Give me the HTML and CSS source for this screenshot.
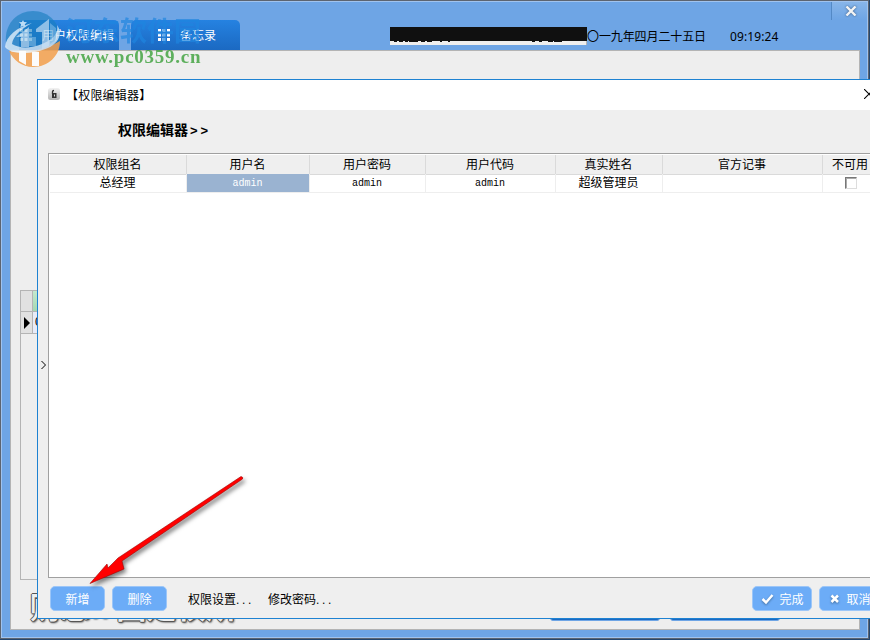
FILE: index.html
```html
<!DOCTYPE html>
<html lang="zh-CN">
<head>
  <meta charset="utf-8">
  <title>权限编辑器</title>
  <link rel="stylesheet" href="styles.css">
</head>
<body>
  <div class="main-window">
    <div class="top-bar">
      <div class="tabs">
        <div class="tab first">
          <svg class="grid-icon" viewBox="0 0 12 12"><path d="M0 0h3v3H0zM4.500 0h3v3h-3zM9 0h3v3H9zM0 4.500h3v3H0zM4.500 4.500h3v3h-3zM9 4.500h3v3H9zM0 9h3v3H0zM4.500 9h3v3h-3zM9 9h3v3H9z"/></svg>
          <span>用户权限编辑</span>
        </div>
        <div class="tab">
          <svg class="grid-icon" viewBox="0 0 12 12"><path d="M0 0h3v3H0zM4.500 0h3v3h-3zM9 0h3v3H9zM0 4.500h3v3H0zM4.500 4.500h3v3h-3zM9 4.500h3v3H9zM0 9h3v3H0zM4.500 9h3v3h-3zM9 9h3v3H9z"/></svg>
          <span>备忘录</span>
        </div>
      </div>
      <div class="status">
        <svg class="redacted" viewBox="0 0 197 18">
          <path fill="#eee" d="M0 0h197v18H0z"/>
          <path fill="#101010" d="M0 0h197v14H0zM4 14h3v1H4zM9 14h4v1H9zM15 14h3v1h-3zM19 14h9v1h-9zM31 14h4v1h-4zM37 14h5v1h-5zM50 14h2v1h-2zM58 14h2v1h-2zM142 14h3v1h-3zM149 14h3v1h-3zM158 14h5v1h-5zM164 14h8v1h-8z"/>
          <path fill="#b4b4b4" d="M196 14h1v4h-1z"/>
        </svg>
        <span class="date">〇一九年四月二十五日</span>
        <span class="time">09:19:24</span>
      </div>
      <div class="window-close">
        <svg viewBox="0 0 12 10"><path d="M1.500.5 10.500 9.500M10.500.5 1.500 9.500"/></svg>
      </div>
    </div>
    <div class="content">
      <div class="back-grid">
        <div class="back-row"><i></i><b class="green"></b></div>
        <div class="back-row">
          <i><svg viewBox="0 0 6 12"><path d="M0 0 6 6 0 12z"/></svg></i><b>0</b>
        </div>
      </div>
      <div class="back-footer">
        <span class="slogan">购您.. 固定权所</span>
        <span class="back-btn"></span>
        <span class="back-btn"></span>
      </div>
    </div>
  </div>

  <!-- Permission editor -->
  <div class="dialog">
    <div class="dialog-title">
      <svg class="lock-icon" viewBox="0 0 12 12">
        <defs><linearGradient id="lockBg" x2="0" y2="1"><stop stop-color="#f2f2f2"/><stop offset="1" stop-color="#b4b4b4"/></linearGradient></defs>
        <rect width="12" height="12" rx="2.500" fill="url(#lockBg)"/>
        <path d="M4.500 6V3.500q0-1 1.500-1" fill="none" stroke="#333" stroke-width="1.300"/>
        <path d="M4 5h4.500v5H4z" fill="#333"/><path d="M6 6.500h1v2H6z" fill="#ddd"/>
      </svg>
      <span>【权限编辑器】</span>
      <svg class="dialog-close" viewBox="0 0 10 10"><path d="M0 0 10 10M10 0 0 10"/></svg>
    </div>
    <div class="dialog-body">
      <div class="splitter"><svg viewBox="0 0 5 8"><path d="M.5 0 4.500 4 .5 8"/></svg></div>
      <div class="panel">
        <h1 class="heading">权限编辑器<span>&gt;&gt;</span></h1>
        <div class="grid">
          <div class="row head">
            <div>权限组名</div><div>用户名</div><div>用户密码</div><div>用户代码</div><div>真实姓名</div><div>官方记事</div><div>不可用</div>
          </div>
          <div class="row">
            <div>总经理</div><div class="selected latin">admin</div><div class="latin">admin</div><div class="latin">admin</div><div>超级管理员</div><div></div><div><span class="checkbox"></span></div>
          </div>
        </div>
        <div class="actions">
          <button class="btn">新增</button>
          <button class="btn">删除</button>
          <span class="link">权限设置<em>...</em></span>
          <span class="link">修改密码<em>...</em></span>
          <button class="btn done"><svg viewBox="0 0 13 12"><path d="M1.500 6 5 9.500 11.500 2"/></svg>完成</button>
          <button class="btn cancel"><svg viewBox="0 0 10 10"><path d="M1.500 1.500 8 8M8 1.500 1.500 8"/></svg>取消</button>
        </div>
      </div>
    </div>
  </div>

  <!-- Site watermark -->
  <div class="watermark">
    <svg viewBox="0 0 58 58">
      <path d="M2 33C0 14 13 1 29 1s27 12 27 28c0 3-1 7-3 9L4 40z" fill="#1a7fc0" opacity=".75"/>
      <path d="M56 31c0 15-12 26-27 26C18 57 9 50 5 41c10 2 21 1 31-2 8-2 15-5 20-8z" fill="#f3a04c"/>
      <path d="M1 37C2 26 13 17 28 13 17 19 9 26 8 34c8 5 20 4 30 0 10-4 17-10 15-19 6 8 2 18-9 23C31 44 8 46 1 37z" fill="#eaf5fc" opacity=".85"/>
      <path d="M12 27 25 17v20h-8V27zM32 19 45 9v27l-7 3V22h-6z" fill="#eaf5fc" opacity=".65"/>
      <path d="M46 13l6 5v12l-6 4zM25 27h7v9h-7z" fill="#8fc4e8" opacity=".6"/>
      <path d="M15 41h7v14l-7-4zM28 42h7v14h-7z" fill="#fff"/>
      <path d="m19 10 1 2 3 .3-2.200 2 .6 3-2.400-1.600-2.600 1.500.7-3-2.200-2 3-.2z" fill="#d7eefb"/>
    </svg>
    <div class="watermark-name">河东软件园</div>
    <div class="watermark-url">www.pc0359.cn</div>
  </div>

  <svg class="arrow" viewBox="0 0 170 120">
    <path d="M161 16.500q2.500.5 1.500 2.500L42 101 44 109 10 123.500 27 104 28 108 38 98z"/>
  </svg>
</body>
</html>
```
FILE: styles.css
```css
* {
  box-sizing: border-box;
}

body {
  margin: 0;
  width: 870px;
  height: 640px;
  overflow: hidden;
  position: relative;
  background: #24476f;
  font-family: "Liberation Sans", "Noto Sans CJK SC", sans-serif;
  font-size: 12px;
  color: #000;
}

/* Main window behind the dialog */
.main-window {
  width: 869px;
  height: 639px;
  display: flex;
  flex-direction: column;
  padding: 0 8px 8px 9px;
  background: #6ea5e5;
  border: 1px solid #5c6470;
  box-shadow: inset 1px 1px #a0c3ee, inset -1px -1px #a0c3ee;
}

.top-bar {
  height: 49px;
  flex: none;
  display: flex;
}

.tabs {
  display: flex;
  gap: 12px;
  padding: 19px 0 0 9px;
  width: 380px;
  flex: none;
}

.tab {
  width: 109px;
  height: 30px;
  display: flex;
  align-items: center;
  gap: 10px;
  padding: 0 0 2px 27px;
  border-radius: 5px 5px 0 0;
  background: linear-gradient(#2582e1, #1b69c2);
  color: #fff;
  white-space: nowrap;
}

.tab.first {
  width: 100px;
  padding-left: 1px;
}

.grid-icon {
  width: 12px;
  height: 12px;
  fill: #fff;
  flex: none;
  margin-top: 1px;
}

.status {
  display: flex;
  align-items: flex-start;
  width: 441px;
  flex: none;
  padding-top: 26px;
}

.redacted {
  width: 197px;
  height: 18px;
  flex: none;
}

.date {
  font-family: "Noto Sans CJK SC", sans-serif;
  line-height: 18px;
  letter-spacing: -.1px;
  width: 143px;
  white-space: nowrap;
}

.time {
  font-family: "Noto Sans", sans-serif;
  line-height: 20px;
  letter-spacing: .1px;
}

.window-close {
  width: 36px;
  height: 18px;
  margin-top: 1px;
  flex: none;
  border-left: 1px solid #5389c6;
  background: linear-gradient(#87b5e9, #6ea5e5);
  padding: 4px 0 0 13px;
}

.window-close svg {
  display: block;
  width: 12px;
  height: 10px;
  stroke: #f4f4f4;
  stroke-width: 2.4;
  filter: drop-shadow(0 0 1px #36577f);
}

.content {
  flex: 1;
  width: 850px;
  background: #eee;
  border: 1px solid #b4b4b4;
  padding: 239px 0 0 9px;
}

.back-grid {
  width: 600px;
  height: 290px;
  border: 1px solid #b4b4b4;
}

.back-row {
  display: flex;
  height: 21px;
  border-bottom: 1px solid #b4b4b4;
}

.back-row + .back-row {
  height: 22px;
}

.back-row i {
  width: 12px;
  border-right: 1px solid #b4b4b4;
  background: #e1e1e1;
  padding: 5px 0 0 3px;
}

.back-row i svg {
  display: block;
  width: 6px;
  height: 12px;
}

.back-row b {
  width: 60px;
  background: #e8ebf8;
  padding: 3px 0 0 2px;
  font-weight: normal;
}

.back-row .green {
  background: linear-gradient(#c5e9ce, #a5d8b2);
}

.back-footer {
  display: flex;
  align-items: flex-start;
  padding-top: 11px;
}

.slogan {
  width: 530px;
  height: 37px;
  padding-left: 10px;
  font: bold 30px/29px "Noto Sans CJK SC", sans-serif;
  color: #eee;
  text-shadow: 1px 0 #555, -1px 0 #555, 0 1px #555, 0 -1px #555, 1px 1px 2px #555, 1px 1px 2px #555;
  white-space: nowrap;
}

.back-btn {
  width: 110px;
  height: 30px;
  margin-right: 10px;
  border-radius: 3px;
  border: 1px solid #6ea5e5;
  background: #1b69c2;
}

/* Dialog */
.dialog {
  position: absolute;
  left: 37px;
  top: 79px;
  width: 870px;
  height: 540px;
  border: 1px solid #1e82d2;
  background: #efefef;
  display: flex;
  flex-direction: column;
}

.dialog-title {
  height: 30px;
  flex: none;
  display: flex;
  align-items: center;
  background: #fff;
  padding: 0 0 2px 10px;
}

.lock-icon {
  width: 12px;
  height: 12px;
  margin-right: 6px;
}

.dialog-title span {
  width: 798px;
  letter-spacing: .2px;
}

.dialog-close {
  width: 10px;
  height: 10px;
  stroke: #000;
  stroke-width: 1.1;
  flex: none;
}

.dialog-body {
  flex: 1;
  display: flex;
}

.splitter {
  width: 10px;
  display: flex;
  align-items: center;
  padding: 2px 0 0 3px;
}

.splitter svg {
  width: 5px;
  height: 8px;
  fill: none;
  stroke: #000;
}

.panel {
  flex: 1;
  display: flex;
  flex-direction: column;
}

.heading {
  height: 43px;
  margin: 0;
  padding: 10px 0 0 70px;
  font-size: 14px;
  line-height: 20px;
}

.heading span {
  font-size: 13px;
  letter-spacing: 3px;
  margin-left: 2px;
}

.grid {
  height: 425px;
  border: 1px solid #a0a0a0;
  background: #fff;
  padding: 1px;
}

.row {
  display: grid;
  grid-template-columns: 137px 123px 116px 130px 107px 160px 56px;
  height: 19px;
}

.row div {
  display: flex;
  align-items: center;
  justify-content: center;
  border-right: 1px solid #eee;
  border-bottom: 1px solid #eee;
  line-height: 17px;
  padding-right: 1px;
}

.row.head div {
  background: #efefef;
  border-color: #dadada;
  padding-top: 2px;
}

.row .latin {
  font-family: "Liberation Mono", monospace;
  font-size: 10px;
}

.row .selected {
  background: #9ab3d1;
  color: #fff;
}

.checkbox {
  width: 12px;
  height: 12px;
  margin: 0 0 1px 2px;
  background: #fff;
  border: 1px solid;
  border-color: #777 #ddd #ddd #777;
  box-shadow: inset 1px 1px #aaa;
}

.actions {
  flex: 1;
  display: flex;
  align-items: center;
  padding: 1px 0 0 2px;
}

.btn {
  width: 55px;
  height: 25px;
  margin: 0 7px 0 0;
  padding: 0 0 1px;
  flex: none;
  display: flex;
  align-items: center;
  justify-content: center;
  border: 1px solid #9cc6f8;
  border-radius: 5px;
  background: #6cacf7;
  color: #fff;
  font: 12px "Liberation Sans", "Noto Sans CJK SC", sans-serif;
}

.link {
  width: 80px;
  white-space: nowrap;
}

.link:nth-of-type(1) {
  margin-left: 14px;
}

.link em {
  font-style: normal;
  letter-spacing: 2.6px;
}

.btn svg {
  fill: none;
  stroke: #fff;
  stroke-width: 2.5;
  filter: drop-shadow(0 1px 1px #416e9f);
}

.done {
  width: 60px;
  margin-left: 404px;
}

.done svg {
  width: 13px;
  height: 12px;
  margin: 1px 5px 0 1px;
}

.cancel {
  width: 63px;
}

.cancel svg {
  width: 10px;
  height: 10px;
  margin: 2px 6px 0 0;
}

/* Overlays */
.watermark {
  position: absolute;
  left: 4px;
  top: 10px;
  width: 210px;
  height: 60px;
  opacity: .85;
}

.watermark svg {
  position: absolute;
  width: 58px;
  height: 58px;
}

.watermark-name {
  position: absolute;
  left: 62px;
  top: 2px;
  font: bold 27px/36px "Noto Sans CJK SC", sans-serif;
  color: #1f86e0;
  opacity: .8;
  white-space: nowrap;
}

.watermark-url {
  position: absolute;
  left: 62px;
  top: 36px;
  font: bold 19px/22px "Liberation Serif", serif;
  letter-spacing: .75px;
  color: #45a544;
  white-space: nowrap;
}

.arrow {
  position: absolute;
  left: 80px;
  top: 460px;
  width: 170px;
  height: 120px;
  overflow: visible;
}

.arrow path {
  fill: #f00;
  stroke: #a00000;
  stroke-width: .6;
  filter: drop-shadow(2px 3px 2px rgba(0, 0, 0, .5));
}
```
